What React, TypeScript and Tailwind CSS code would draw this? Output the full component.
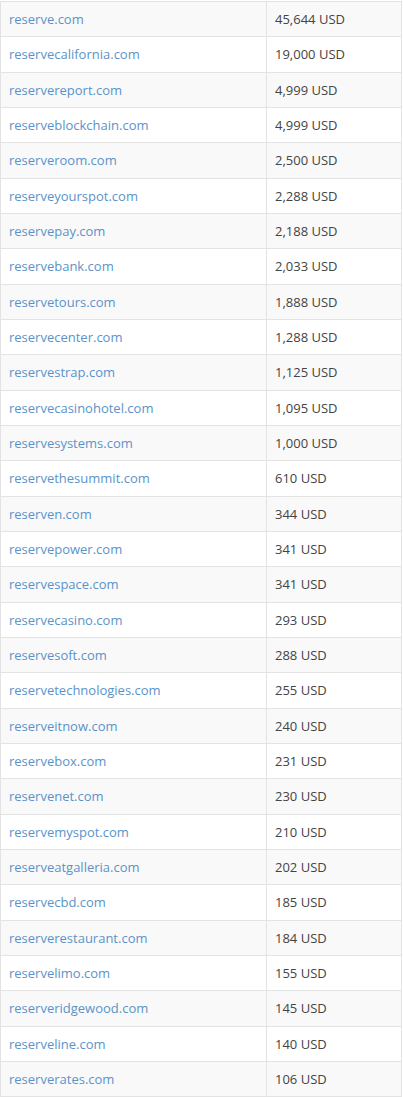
import React from 'react';

const rows: [string, string][] = [
  ['reserve.com', '45,644 USD'],
  ['reservecalifornia.com', '19,000 USD'],
  ['reservereport.com', '4,999 USD'],
  ['reserveblockchain.com', '4,999 USD'],
  ['reserveroom.com', '2,500 USD'],
  ['reserveyourspot.com', '2,288 USD'],
  ['reservepay.com', '2,188 USD'],
  ['reservebank.com', '2,033 USD'],
  ['reservetours.com', '1,888 USD'],
  ['reservecenter.com', '1,288 USD'],
  ['reservestrap.com', '1,125 USD'],
  ['reservecasinohotel.com', '1,095 USD'],
  ['reservesystems.com', '1,000 USD'],
  ['reservethesummit.com', '610 USD'],
  ['reserven.com', '344 USD'],
  ['reservepower.com', '341 USD'],
  ['reservespace.com', '341 USD'],
  ['reservecasino.com', '293 USD'],
  ['reservesoft.com', '288 USD'],
  ['reservetechnologies.com', '255 USD'],
  ['reserveitnow.com', '240 USD'],
  ['reservebox.com', '231 USD'],
  ['reservenet.com', '230 USD'],
  ['reservemyspot.com', '210 USD'],
  ['reserveatgalleria.com', '202 USD'],
  ['reservecbd.com', '185 USD'],
  ['reserverestaurant.com', '184 USD'],
  ['reservelimo.com', '155 USD'],
  ['reserveridgewood.com', '145 USD'],
  ['reserveline.com', '140 USD'],
  ['reserverates.com', '106 USD'],
];

export default function App() {
  return (
    <div className="w-[403px] bg-white pt-px font-['Open_Sans',sans-serif] text-[13px] leading-[18.33px]">
      <table className="w-[402px] border-collapse">
        <tbody>
          {rows.map(([domain, price], i) => (
            <tr key={domain} className={i % 2 === 0 ? 'bg-[#f9f9f9]' : 'bg-white'}>
              <td className="w-[266px] border border-[#e3e3e3] px-2 py-2">
                <a href="#" className="text-[#5b93c9]">{domain}</a>
              </td>
              <td className="border border-[#e3e3e3] px-2 py-2 text-[#444]">{price}</td>
            </tr>
          ))}
        </tbody>
      </table>
    </div>
  );
}
